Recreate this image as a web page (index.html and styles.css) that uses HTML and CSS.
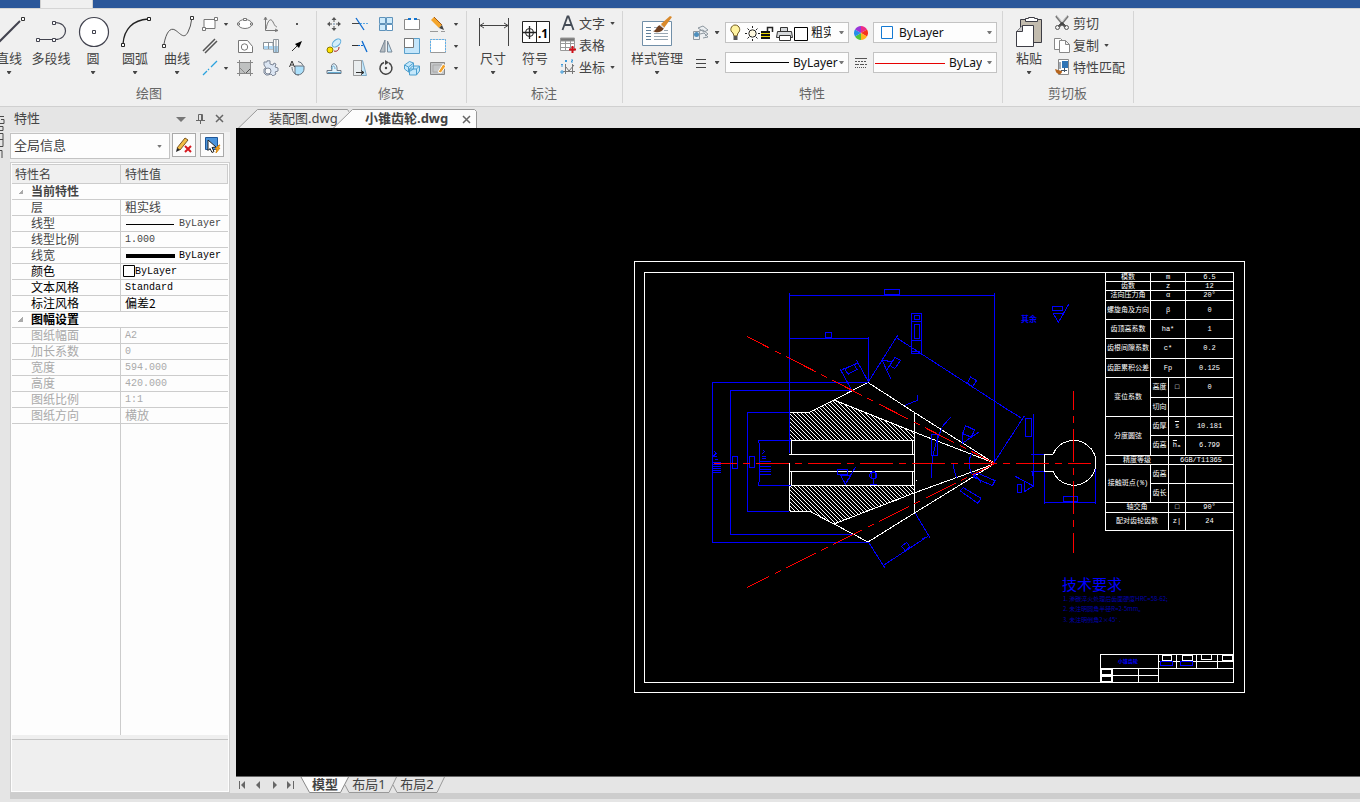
FILE: index.html
```html
<!DOCTYPE html>
<html lang="zh-CN">
<head>
<meta charset="utf-8">
<title>小锥齿轮.dwg</title>
<link rel="stylesheet" href="styles.css">
</head>
<body>
<div class="titlebar"><span class="titlebar-tab"></span></div>

<header class="ribbon">
  <section class="group group-draw">
    <div class="group-body">
      <button class="big"><svg width="42" height="36" fill="none"><path d="M9 31 32 8" stroke="#42434f" stroke-width="2"/><path d="M33.500 4.500h3v3h-3z" stroke="#333" fill="#fff"/></svg><span>直线</span><i class="caret"></i></button>
      <button class="big"><svg width="42" height="36" fill="none" stroke="#42434f"><path d="M8 26.500h17c14 0 14-17 0-17" stroke-width="1.200"/><path d="M6.500 25.500h3v3h-3zM22.500 25.500h3v3h-3zM22.500 8.500h3v3h-3z" fill="#fff"/></svg><span>多段线</span></button>
      <button class="big"><svg width="42" height="36" fill="#fff" stroke="#42434f"><circle cx="22" cy="19" r="14.500" stroke-width="1.200"/><path d="M20.500 17.500h3v3h-3z"/></svg><span>圆</span><i class="caret"></i></button>
      <button class="big"><svg width="42" height="36" fill="none" stroke="#222"><path d="M9 31C10 16 19 7 34 6" stroke-width="1.300"/><path d="M7.500 30.500h3v3h-3zM33.500 4.500h3v3h-3z" fill="#fff"/></svg><span>圆弧</span><i class="caret"></i></button>
      <button class="big"><svg width="42" height="36" fill="none" stroke="#555"><path d="M8 31C10 20 14 14 19 17S28 27 32 19Q35 13 35.500 7"/><path d="M6.500 31.500h3v3h-3zM34.500 3.500h3v3h-3z" fill="#fff" stroke="#333"/></svg><span>曲线</span><i class="caret"></i></button>
      <div class="tools tools-draw">
        <button aria-label="矩形"><svg width="16" height="16" fill="#fff" stroke="#777"><path d="M2 3.500h11v9H2z"/><path d="M.5 11.500h3v3h-3zM12.500 1.500h3v3h-3z"/></svg></button>
        <button aria-label="矩形选项"><i class="caret"></i></button>
        <button aria-label="椭圆"><svg width="16" height="16" fill="#fff" stroke="#777"><ellipse cx="8" cy="8" rx="7" ry="4.500"/><path d="M6.500 2.500h3v2h-3zM.5 7h2v2h-2zM13.500 7h2v2h-2z"/></svg></button>
        <button aria-label="公式曲线"><svg width="16" height="16" fill="none" stroke="#777"><path d="M2.500 2v12.500H15M1 4l1.500-3L4 4M12 13l3 1.500-3 1M3 13C5 3 8 2 10 6s2 4 4 5"/></svg></button>
        <button aria-label="点"><svg width="16" height="16"><path d="M7 7h2v2H7z" fill="#555"/></svg></button>
        <button aria-label="平行线"><svg width="16" height="16" stroke="#555" stroke-width="1.500"><path d="M1 13 13 1M3 15 15 3"/></svg></button>
        <span></span>
        <button aria-label="孔"><svg width="16" height="16" fill="#fff" stroke="#777"><path d="M1.500 2.500h9l5 6v6h-14z"/><circle cx="7.500" cy="9" r="3.200"/></svg></button>
        <button aria-label="轴"><svg width="16" height="16" fill="#fff" stroke="#8a9299"><path d="M.5 4.500H10V11H.5zM10.500 1.500h5v13h-5z"/><path d="M1 8h9v3H1zM11 8h4v6h-4z" fill="#abd4f0" stroke="none"/><path d="M5.500 5v6M13 2v12"/></svg></button>
        <button aria-label="箭头"><svg width="16" height="16"><path d="M3 13l5-5" stroke="#333"/><path d="M13 3 10 10 6 6z"/></svg></button>
        <button aria-label="中心线"><svg width="16" height="16" stroke="#2aa2de" stroke-width="1.300"><path d="M1 15 5 11M6 10l1-1M9 7 15 1"/></svg></button>
        <button aria-label="中心线选项"><i class="caret"></i></button>
        <button aria-label="剖面线"><svg width="16" height="16" fill="#bfc1c1" stroke="#888"><path d="M2.500 2.500h11v11h-11z"/><path d="M3 8l5 5M0 2.500h16M2.500 0v16M13.500 0v16M0 13.500h16"/><path d="M9 13l4-4" stroke="#555"/></svg></button>
        <button aria-label="齿轮"><svg width="16" height="16" fill="#dce6f3" stroke="#7d8696"><path d="M1 5V2h3V.8h3V4l3 1 1-2 2 1-1 3 3 1v3l-3 1 1 2-3 2-2-2-3 1H3l-2-2V9l2-1z"/><circle cx="5" cy="11" r="3" fill="#f8fafc"/></svg></button>
        <button aria-label="局部放大"><svg width="16" height="16" fill="none" stroke="#66717c"><path d="M6 6h9v3a6 6 0 0 1-9 5z" fill="#ace0fb"/><path d="M3 7c0 5 3 8 7 8M9 1.500a6 6 0 0 1 5 4"/><path d="M.5 7 3 1l2.500 6M1.500 5h3" stroke="#333"/></svg></button>
      </div>
    </div>
    <h2>绘图</h2>
  </section>

  <section class="group group-modify">
    <div class="group-body">
      <div class="tools tools-modify">
        <button aria-label="平移"><svg width="16" height="16" fill="#555"><path d="M8 1l2.500 3h-2v2h-1V4h-2zM8 15l2.500-3h-2v-2h-1v2h-2zM1 8l3-2.500v2h2v1H4v2zM15 8l-3-2.500v2h-2v1h2v2z"/><path d="M7 7h2v2H7z" fill="#abc"/></svg></button>
        <button aria-label="裁剪"><svg width="16" height="16" fill="none"><path d="M0 7.500h8" stroke="#444"/><path d="M8 7.500h8" stroke="#5aa9e6" stroke-dasharray="2 1"/><path d="M4 2l8 12" stroke="#0a6ad0" stroke-width="1.300"/></svg></button>
        <button aria-label="阵列"><svg width="16" height="16" stroke="#5f93bb" fill="#cdeafb"><path d="M1.500 1.500h6v6h-6zM8.500 1.500h6v6h-6zM1.500 8.500h6v6h-6z"/><path d="M8.500 8.500h6v6h-6z" fill="#fff"/></svg></button>
        <button aria-label="打断"><svg width="16" height="16" fill="#fff" stroke="#888"><path d="M5 3.500H.5v10h15v-10H11"/><path d="M4 2h3v2H4zM10 2h3v2h-3z" fill="#1274d0" stroke="none"/></svg></button>
        <button aria-label="删除"><svg width="16" height="16"><path d="M1 4 4 1l8 8-3 3z" fill="#f4a52b"/><path d="M4 1l8 8" stroke="#a45c1c"/><path d="M9 12l3-3 2 5z" fill="#444"/><path d="M0 15.500h8M11 15.500h4" stroke="#999"/></svg></button>
        <button aria-label="删除选项"><i class="caret"></i></button>
        <button aria-label="平移复制"><svg width="16" height="16" fill="none"><ellipse cx="10.500" cy="5" rx="5" ry="3" transform="rotate(-40 10.500 5)" stroke="#56a7da" fill="#d3edfb"/><circle cx="4" cy="12" r="3" fill="#ffe100" stroke="#8a7b00"/><path d="M8 13c3 1 5-1 5-4" stroke="#a22"/></svg></button>
        <button aria-label="延伸"><svg width="16" height="16" fill="none"><path d="M0 7.500h6" stroke="#333"/><path d="M6 7.500h6" stroke="#0a6ad0" stroke-dasharray="2 1"/><path d="M10 3l5 11" stroke="#0a6ad0" stroke-width="1.300"/></svg></button>
        <button aria-label="镜像"><svg width="16" height="16" stroke="#7b8997"><path d="M7 2v12H2z" fill="#b7bdc2"/><path d="M9.500 3v11H14z" fill="#c6e8fb"/></svg></button>
        <button aria-label="缩放"><svg width="16" height="16" stroke="#5a9fca"><path d="M.5.5h15v15H.5z" fill="#c4e6fb"/><path d="M.5.5h9v9h-9z" fill="#fff" stroke="#777"/></svg></button>
        <button aria-label="拉伸"><svg width="16" height="16" fill="#fff"><path d="M.5 1.500h15v13H.5z" stroke="#999"/><path d="M.5 14V1.500h15V14" stroke="#5fb0ea" stroke-dasharray="2 1"/></svg></button>
        <button aria-label="拉伸选项"><i class="caret"></i></button>
        <button aria-label="偏移"><svg width="16" height="16" fill="none" stroke="#6a7683"><path d="M1 10.500h5c-3-9 6-9 5 0h4v3H1z" fill="#e3f3fc"/><path d="M2 12.500h13M6 9c0-4 3-4 3 0" stroke="#63a9cf"/></svg></button>
        <button aria-label="拉长"><svg width="16" height="16" stroke="#7fabc8"><path d="M1.500.5h9l4 15h-13z" fill="#c5e8fb"/><path d="M1.500.5h8v15h-8z" fill="#e9edef" stroke="#999"/><path d="M4 12.500h8m-3-2 3 2-3 2" stroke="#333" fill="none"/></svg></button>
        <button aria-label="旋转"><svg width="16" height="16" fill="none"><path d="M6 2.500a6 6 0 1 0 5 .5" stroke="#444" stroke-width="1.500"/><path d="M7 0v5l4-2.500z" fill="#444"/><circle cx="8" cy="8" r="1.200" fill="#444"/></svg></button>
        <button aria-label="立体"><svg width="16" height="16" fill="#c5e8fb" stroke="#4d9fce"><path d="M.5 5l5-3.500 4 1.500v6l-5 3-4-3zM5.500 9l3-3h7v5l-3 4h-7z"/><path d="M.5 5l4 2v5M4.500 7l5-4M5.500 9h7v6M12.500 9l3-3" fill="none"/></svg></button>
        <button aria-label="编辑剖面"><svg width="16" height="16" fill="#c4c6c8" stroke="#888"><path d="M.5 2.500h14v12H.5z"/><path d="M3 5h9v7H3z" stroke="#aaa"/><path d="M8 12l5-8 3 2-5 7z" fill="#f2a22b" stroke="#fff"/></svg></button>
        <button aria-label="编辑选项"><i class="caret"></i></button>
      </div>
    </div>
    <h2>修改</h2>
  </section>

  <section class="group group-annotate">
    <div class="group-body">
      <button class="big"><svg width="42" height="36" fill="none" stroke="#444"><path d="M7.500 5v28M36.500 5v28M8 12.500h28M12 10l-4 2.500 4 2.500M32 10l4 2.500-4 2.500"/></svg><span>尺寸</span><i class="caret"></i></button>
      <button class="big"><svg width="42" height="36" fill="#fff" stroke="#222"><path d="M8.500 8.500h27v21h-27zM22.500 8.500v21"/><circle cx="15.500" cy="19.500" r="4"/><path d="M9 19.500h13M15.500 13v13" stroke-width="1.300"/><text x="24" y="25" class="icon-text">.1</text></svg><span>符号</span><i class="caret"></i></button>
      <div class="list list-annotate">
        <button><svg width="16" height="16" fill="none" stroke="#444b55" stroke-width="1.800"><path d="M2.500 15 7.500 1.500h1l5 13.500M4 10h8"/></svg>文字<i class="caret"></i></button>
        <button><svg width="16" height="16" fill="#fff" stroke="#999"><path d="M.5 1.500h14v12H.5zM.5 6.500h14M.5 10.500h14M5.500 4v9M10.500 4v9"/><path d="M.5 1h14v3H.5z" fill="#777"/><path d="M12.500 9v7M9 12.500h7" stroke="#d01018" stroke-width="2"/></svg>表格</button>
        <button><svg width="16" height="16" fill="none" stroke="#777"><path d="M5.500 5v10M3 12.500h12M12.500 5v10M6 8l3 4 5-6"/><path d="M5 1l2 2m0-2L5 3M11 1h2l-2 2h2M1 5l1 1 1-1M2 6v2M1 12h2v2H1z" stroke="#3d9ad9"/></svg>坐标<i class="caret"></i></button>
      </div>
    </div>
    <h2>标注</h2>
  </section>

  <section class="group group-props">
    <div class="group-body">
      <button class="big wide"><svg width="42" height="36" fill="none"><path d="M6.500 8.500h29v24h-29z" fill="#fff" stroke="#718fa8"/><path d="M10 14.500h5M10 17.500h5M10 20.500h5M10 23.500h5M10 26.500h5" stroke="#5f7f9a"/><path d="M18 14.500h4M18 20.500h14M18 23.500h14M18 26.500h14M28 17.500h4" stroke="#9aa8b4"/><path d="M17 18c4 0 3-6 8-6l3 3c-2 5-8 5-11 3z" fill="#71401f"/><path d="M25 11 34 3l2 1-8 11z" fill="#d9892b"/><path d="M24 12l4 3" stroke="#ddd" stroke-width="1.500"/></svg><span>样式管理</span><i class="caret"></i></button>
      <div class="prop-tools">
        <button aria-label="图层"><svg width="16" height="16" fill="#eceff2" stroke="#8d979f"><path d="M5 3l5-2 5 4-4 2zM6 6l4-1 5 4-3 2M7 9l4-1 4 4-5 1"/><path d="M.5 6.500h6v8h-6z"/><circle cx="3.500" cy="9.500" r="2.500" fill="#4e8fbd" stroke="none"/></svg></button>
        <button aria-label="图层选项"><i class="caret"></i></button>
        <div class="combo">
          <select class="sel-layer" aria-label="图层"><option>粗实线</option></select>
          <svg width="84" height="19" fill="none"><path d="M9 2c5 0 6 6 3 8l-1 3H8l-1-3C3 8 5 2 9 2z" fill="#fff3a0" stroke="#70591f"/><path d="M7.500 13h4v4h-4z" fill="#555"/><circle cx="26.500" cy="10.500" r="3.700" stroke="#222" fill="#fff9df"/><path d="M26.500 3v2M26.500 16v2M19 10.500h2M32 10.500h2M21.500 5.500l1.500 1.500M30 14l1.500 1.500M21.500 15.500l1.500-1.500M30 7l1.500-1.500" stroke="#222"/><path d="M35 8h9v8h-9z" fill="#111"/><path d="M35 10.500h9M35 13.500h9" stroke="#e7d400"/><path d="M41.500 8V4.500h5V9" stroke="#222" stroke-width="1.500"/><path d="M54.500 8V4.500h7V8M51.500 8.500h14l1 6h-16z" stroke="#333" fill="#d6d9dc"/><path d="M53.500 12.500h11v5h-11z" stroke="#333" fill="#fff"/><path d="M68.500 4.500h13v13h-13z" stroke="#000" fill="#fff"/></svg>
          <i class="caret"></i>
        </div>
        <button aria-label="颜色"><svg width="14" height="14"><path d="M7 7V0a7 7 0 0 1 6 3.500z" fill="#ed2c86"/><path d="M7 7l6-3.500a7 7 0 0 1 0 7z" fill="#f5331c"/><path d="M7 7l6 3.500A7 7 0 0 1 7 14z" fill="#ffb21c"/><path d="M7 7v7a7 7 0 0 1-6-3.500z" fill="#50c23a"/><path d="M7 7 1 10.500a7 7 0 0 1 0-7z" fill="#278fe8"/><path d="M7 7 1 3.500A7 7 0 0 1 7 0z" fill="#9a36d8"/></svg></button>
        <div class="combo">
          <select class="sel-color" aria-label="颜色"><option>ByLayer</option></select>
          <svg width="24" height="19"><path d="M7.500 3.500h11v12h-11z" fill="#fff" stroke="#1479d2"/></svg>
          <i class="caret"></i>
        </div>
        <button aria-label="线型"><svg width="12" height="12" stroke="#444"><path d="M1 2.500h10M1 6.500h10M1 10.500h10"/></svg></button>
        <button aria-label="线型选项"><i class="caret"></i></button>
        <div class="combo">
          <select class="sel-linetype" aria-label="线型"><option>ByLayer</option></select>
          <svg width="66" height="19"><path d="M4 9.500h59" stroke="#000"/></svg>
          <i class="caret"></i>
        </div>
        <button aria-label="线宽"><svg width="14" height="14" stroke="#555"><path d="M1 2.500h12"/><path d="M1 5.500h12" stroke-dasharray="2 1"/><path d="M1 8.500h12" stroke-dasharray="4 1"/><path d="M1 11.500h12" stroke-dasharray="1 1"/></svg></button>
        <div class="combo">
          <select class="sel-weight" aria-label="线宽"><option>ByLayer</option></select>
          <svg width="72" height="19"><path d="M1 10.500h70" stroke="#e60000"/></svg>
          <i class="caret"></i>
        </div>
      </div>
    </div>
    <h2>特性</h2>
  </section>

  <section class="group group-clip">
    <div class="group-body">
      <button class="big"><svg width="42" height="36" fill="#fff" stroke="#3d3d45"><path d="M12.500 6.500h21v23h-21z" fill="#c3bcae"/><path d="M17.500 8.500v-3h3v-1h6v1h3v3z"/><path d="M14.500 12.500h11v21h-17v-15z"/><path d="M8.500 18.500h6v-6" fill="#ccc"/></svg><span>粘贴</span><i class="caret"></i></button>
      <div class="list">
        <button><svg width="16" height="16" fill="none" stroke="#555"><path d="M2 1l9 11M14 1 5 12" stroke="#777" stroke-width="2"/><path d="M3 1l8 10M13 1 5 11" stroke="#eee" stroke-width=".7"/><path d="M8 7l4 4-4-1-4 1z" fill="#444"/><circle cx="3.500" cy="12.500" r="2"/><circle cx="12.500" cy="12.500" r="2"/></svg>剪切</button>
        <button><svg width="16" height="16" fill="#fff" stroke="#888"><path d="M.5 1.500h6l3 3v8h-9z"/><path d="M5.500 3.500h6l4 4v8h-10zM11.500 3.500v4h4"/></svg>复制<i class="caret caret-far"></i></button>
        <button><svg width="16" height="16" fill="#fff" stroke="#888"><path d="M4.500.5h10v15h-10z"/><path d="M8 2h6v7H8z" fill="#2f74b5" stroke="none"/><path d="M6 3v7M7 11.500h6M10.500 9v4" stroke="#456"/><path d="M1 10l3 1 4 1c0 4-4 4-6 1z" fill="#b5651e" stroke="none"/></svg>特性匹配</button>
      </div>
    </div>
    <h2>剪切板</h2>
  </section>
</header>

<div class="workspace">
  <div class="dock-strip"><svg width="10" height="44" fill="none" stroke="#4a4a4a"><path d="M0 2.500h4M1 5.500h3v4H0M0 12.500h3v4H0M0 19.500h3v13H0M0 25.500h3M0 36.500h2v8"/></svg></div>

  <aside class="panel">
    <div class="panel-title">
      <span>特性</span>
      <button aria-label="菜单"><svg width="10" height="8"><path d="M0 2h10L5 7z" fill="#777"/></svg></button>
      <button aria-label="固定"><svg width="9" height="10" fill="none" stroke="#666"><path d="M2.500 6V.5h4V6M5.500 1v5M0 6.500h9M4.500 7v3"/></svg></button>
      <button aria-label="关闭"><svg width="9" height="9" stroke="#666" stroke-width="1.500"><path d="M1 1l7 7M8 1 1 8"/></svg></button>
    </div>
    <div class="panel-filter">
      <div class="combo"><select class="sel-info" aria-label="选择对象"><option>全局信息</option></select><i class="caret"></i></div>
      <button class="tool" aria-label="取消选择"><svg width="18" height="18"><path d="M2 12 10 2l3 2-8 10z" fill="#f2be45" stroke="#7a5421"/><path d="M1 16l1-4 3 2z" fill="#222"/><path d="M10 10l6 6M16 10l-6 6" stroke="#d71920" stroke-width="2"/></svg></button>
      <button class="tool" aria-label="快速选择"><svg width="18" height="18"><path d="M2.500 1.500h12v12h-12z" fill="#4b94db" stroke="#1e5698"/><path d="M5 4l8 7-4 .5 2 4-2 1-2-4-2 2z" fill="#fff" stroke="#222"/><path d="M16 9l-4 4h2l-1 4 4-5h-2l2-3z" fill="#f6a21d" stroke="#d98a10"/></svg></button>
    </div>
    <div class="grid-box">
      <div class="grid-scroll">
        <table class="props">
          <thead><tr><th>特性名</th><th>特性值</th></tr></thead>
          <tbody>
            <tr class="section"><td colspan="2">当前特性</td></tr>
            <tr><td>层</td><td class="han">粗实线</td></tr>
            <tr><td>线型</td><td><svg width="50" height="11"><path d="M1 6.500h48" stroke="#000"/></svg><span class="after">ByLayer</span></td></tr>
            <tr><td>线型比例</td><td>1.000</td></tr>
            <tr><td>线宽</td><td class="strong"><svg width="50" height="11"><path d="M1 6h49" stroke="#000" stroke-width="4"/></svg><span class="after">ByLayer</span></td></tr>
          </tbody>
          <tbody class="strong">
            <tr><td>颜色</td><td><svg class="swatch" width="12" height="12"><path d="M.5.5h11v11H.5z" fill="#fff" stroke="#000"/></svg><span>ByLayer</span></td></tr>
            <tr><td>文本风格</td><td>Standard</td></tr>
            <tr><td>标注风格</td><td class="han">偏差2</td></tr>
            <tr class="section"><td colspan="2">图幅设置</td></tr>
          </tbody>
          <tbody class="dim">
            <tr><td>图纸幅面</td><td>A2</td></tr>
            <tr><td>加长系数</td><td>0</td></tr>
            <tr><td>宽度</td><td>594.000</td></tr>
            <tr><td>高度</td><td>420.000</td></tr>
            <tr><td>图纸比例</td><td>1:1</td></tr>
            <tr><td>图纸方向</td><td class="han">横放</td></tr>
          </tbody>
        </table>
      </div>
      <div class="grid-help"></div>
    </div>
  </aside>

  <main class="editor">
    <nav class="doc-tabs">
      <button class="doc-tab"><svg width="112" height="20"><path d="M.5 20 20.500.5h90l2 3V20z" fill="#eee" stroke="#999"/></svg><span>装配图.dwg</span></button>
      <button class="doc-tab active"><svg width="145" height="20"><path d="M.5 20 20.500.5h122l2 2V20z" fill="#fcfcfc" stroke="#999"/></svg><span>小锥齿轮.dwg</span><svg class="close" width="9" height="9" stroke="#666" stroke-width="1.500"><path d="M1 1l7 7M8 1 1 8"/></svg></button>
    </nav>

    <div class="canvas">
      <svg class="drawing" width="1124" height="648" viewBox="236 128 1124 648" fill="none">
        <defs>
          <pattern id="hatch" width="4" height="4" patternUnits="userSpaceOnUse"><path d="M0 0h1v1H0zM1 1h1v1H1zM2 2h1v1H2zM3 3h1v1H3z" fill="#fff"/></pattern>
        </defs>
        <g class="white">
          <path d="M634.500 261.500h610v431h-610zM644.500 272.500h589v410h-589z"/>
          <path class="plain" d="M790 412h19l25-12 80 32v8H790z" fill="url(#hatch)"/>
          <path class="plain" d="M790 486h124v8l-80 30-24-13h-20z" fill="url(#hatch)"/>
          <path d="M790 412.500h19l25-12.500M790 511.500h20l24 12.500M834 400l34-17.500 46.500 30L994 463M834 400l80 32 80 31M834 524l34 18 46.500-29 79.500-49M834 524l80-31 80-29M914.500 412v101M789.500 463v48"/>
          <path d="M789 440.500h125M789 454.500h125M789 471.500h125M789 485.500h125M791.500 440v14M791.500 471v14M912.500 440v14M912.500 471v14M916 480.500h1"/>
        </g>
        <g class="blue" transform="translate(690 270) scale(.33333)">
          <path d="M298 70v480M298 76h615M913 70v508M584 58h45v15h-45zM298 205h237v-4 135M406 187h18v16h-18z"/>
          <path d="M535 337H67v480h469M486 361H121v432h367M298 427H172v297h126M304 511h-98l2 15v100l-2 20h98"/>
          <path d="M127 559h15v37h-15zM178 559h15v33h-15zM68 577h25M68 583h25M68 589h25M68 595h25M68 601h25M68 607h25M209 574h34M209 589h34M209 598h34M209 604h34M209 613h34"/>
          <path d="M68 560h14M73 545l6 5-8 8M75 570h8M218 540l6 4-8 8M216 559h12M216 567h12"/>
          <path d="M451 298l35 64M500 271l35 64M456 299l48-20M465 297l27-14 9 15-27 15zM535 336l88-140M619 203 959 423M622 205l17 10M577 272l25 54M577 272l30 2-17 26M615 262l17 9-18 25-14-10z"/>
          <path d="M664 130h30v120h-30zM664 154h30M664 211h30M674 136h15v12h-15zM674 163h15v43h-15zM664 244h24v6M842 321l18 11-12 18-16-11zM645 406l37-15v-16"/>
          <path d="M781 442l-24 28M755 475q-35 75-29 148M724 493h19v63h-19zM790 583q1 20 10 42M851 540q-28 42 1 80M817 485v35l51-35M827 467l27 13-11 23-25-13zM819 492l25 9"/>
          <path d="M860 608l55 24-8 15-55-25zM820 653l53 32-9 15-53-37zM851 610l22 27M675 728l46 77M536 817l48 76M582 885l133-87M650 817l9 13-13 13-11-14zM697 807l10-5"/>
          <path d="M443 598h30v15h-30zM452 616h31l-17 26zM466 642l30-50M545 608h12v19h-12zM550 628v15M540 643h20"/><circle cx="550" cy="616" r="11"/>
        </g>
        <g class="blue" transform="translate(1010 255) scale(.33333)">
          <path d="M127 154h31v12h-31zM130 176h31l-16 26zM145 202l31-54M46 490h18v54H46zM0 468l32 20M43 483-48 623M10 474l22 14M70 478v217M64 598h39M64 649h39M67 649v15"/>
          <path d="M16 664l54 29-27 17v-32M22 688h13v24H22zM103 598v148M256 640v106M103 743h153M160 724h42v16h-42z"/>
        </g>
        <g class="white" transform="translate(1010 255) scale(.33333)"><path d="M129 598h-26v51h26M129 598a67 67 0 1 1 0 51"/></g>
        <g class="red">
          <path d="M714 463.500h377" stroke-dashoffset="10"/>
          <path d="M1073.500 391v162" stroke-dashoffset="14"/>
          <path d="M747 336.500 994 463" stroke-dashoffset="8"/>
          <path d="M747 587.500 994 464" stroke-dashoffset="8"/>
        </g>
        <g class="white" transform="translate(1010 530) scale(.33333)">
          <path d="M271 458v-84h400M271 415h400M445 373v85M445 394h225M499 373v42M559 373v42M622 373v42M307 415v43M385 415v43M271 436h174"/>
          <path d="M457 376h28v15h-28zM517 376h31v15h-31zM575 373h30v16h-30zM637 376h31v15h-31z"/>
          <path class="thick" d="M274 418h31v16h-31zM274 439h31v16h-31z"/>
          <path class="blue-line" d="M451 394h37v13h-37zM511 394h37v13h-37z"/>
        </g>
        <g class="note">
          <text x="1021" y="322" class="n8">其余</text>
          <text x="1062" y="590" class="n15">技术要求</text>
          <g class="faint">
            <text x="1063" y="601">1. 渗碳淬火处理后齿面硬度HRC=58-62;</text>
            <text x="1063" y="611">2. 未注明圆角半径R=2-5mm。</text>
            <text x="1063" y="622">3. 未注明倒角2×45° .</text>
          </g>
          <text x="1118" y="663" class="n5">小锥齿轮</text>
        </g>
      </svg>

      <table class="gear">
        <colgroup><col class="c1"><col class="c2"><col class="c3"><col class="c4"></colgroup>
        <tr class="h9"><td>模数</td><td colspan="2">m</td><td>6.5</td></tr>
        <tr class="h9"><td>齿数</td><td colspan="2">z</td><td>12</td></tr>
        <tr class="h10"><td>法向压力角</td><td colspan="2">α</td><td>20°</td></tr>
        <tr class="h19"><td>螺旋角及方向</td><td colspan="2">β</td><td>0</td></tr>
        <tr class="h19"><td>齿顶高系数</td><td colspan="2">ha*</td><td>1</td></tr>
        <tr class="h20"><td>齿根间隙系数</td><td colspan="2">c*</td><td>0.2</td></tr>
        <tr class="h19"><td>齿距累积公差</td><td colspan="2">Fp</td><td>0.125</td></tr>
        <tr class="h20"><td rowspan="2">变位系数</td><td>高度</td><td>□</td><td>0</td></tr>
        <tr class="h19"><td>切向</td><td></td><td></td></tr>
        <tr class="h19"><td rowspan="2">分度圆弦</td><td>齿厚</td><td><span class="bar">s</span></td><td>10.181</td></tr>
        <tr class="h20"><td>齿高</td><td><span class="bar">h</span>ₐ</td><td>6.799</td></tr>
        <tr class="h9"><td colspan="2">精度等级</td><td colspan="2">6GB/T11365</td></tr>
        <tr class="h19"><td rowspan="2">接触斑点(%)</td><td>齿高</td><td></td><td></td></tr>
        <tr class="h19"><td>齿长</td><td></td><td></td></tr>
        <tr class="h10"><td colspan="2">轴交角</td><td>□</td><td>90°</td></tr>
        <tr class="h18"><td colspan="2">配对齿轮齿数</td><td>z|</td><td>24</td></tr>
      </table>
    </div>

    <nav class="layout-tabs">
      <button class="step" aria-label="第一个"><svg width="16" height="16" fill="#666"><path d="M2 4h1v8H2zM8 4v8L4 8z"/></svg></button>
      <button class="step" aria-label="上一个"><svg width="16" height="16" fill="#666"><path d="M7 4v8L3 8z"/></svg></button>
      <button class="step" aria-label="下一个"><svg width="16" height="16" fill="#666"><path d="M4 4v8l4-4z"/></svg></button>
      <button class="step" aria-label="最后一个"><svg width="16" height="16" fill="#666"><path d="M2 4v8l4-4zM8 4h1v8H8z"/></svg></button>
      <button class="layout-tab active"><svg width="48" height="16"><path d="M0 0l8.500 15.500h31L47.500 0" fill="#fcfcfc" stroke="#888"/></svg><span>模型</span></button>
      <button class="layout-tab"><svg width="48" height="16"><path d="M-4 8l4 7.500h40L47.500 0" fill="none" stroke="#999"/></svg><span>布局1</span></button>
      <button class="layout-tab"><svg width="48" height="16"><path d="M-4 8l4 7.500h40L47.500 0" fill="none" stroke="#999"/></svg><span>布局2</span></button>
    </nav>
  </main>
</div>
<footer class="bottom-edge"></footer>
</body>
</html>
```
FILE: styles.css
```css
* { box-sizing: border-box; }

body {
  margin: 0;
  height: 100vh;
  display: flex;
  flex-direction: column;
  overflow: hidden;
  background: #e5e5e5;
  color: #444;
  font: 13px/18px "Noto Sans", "Noto Sans CJK SC", sans-serif;
}

button {
  margin: 0;
  padding: 0;
  border: 0;
  background: none;
  color: inherit;
  font: inherit;
}

svg { display: block; flex: none; }
h2 { margin: 4px 0 0; font: inherit; line-height: 20px; text-align: center; color: #666; }

.caret {
  width: 5px;
  height: 3px;
  flex: none;
  background: #444;
  clip-path: polygon(0 0, 100% 0, 60% 100%, 40% 100%);
}

/* Title bar */
.titlebar { height: 8px; flex: none; display: flex; background: #2b579a; }
.titlebar-tab { width: 53px; margin-left: 40px; background: #f0f0f0; border: solid #d0d0d0; border-width: 0 1px; }

/* Ribbon */
.ribbon {
  flex: none;
  display: flex;
  padding: 2px 0 3px;
  background: #f0f0f0;
  border-top: 1px solid #d5d5d5;
  border-bottom: 1px solid #d0d0d0;
}
.group { padding: 2px 5px 0; border-right: 1px solid #d5d5d5; }
.group-draw { margin-left: -19px; padding: 2px 6px 0 7px; }
.group-modify { padding: 2px 5px 0 4px; }
.group-annotate { padding-right: 6px; }
.group-props { padding-left: 4px; }
.group-clip { padding-right: 6px; }
.group-body { display: flex; height: 66px; }

.big { width: 42px; display: flex; flex-direction: column; align-items: center; white-space: nowrap; }
.big .caret { margin-top: 4px; }
.big.wide { width: 60px; }
.icon-text { font: bold 12px "Noto Sans", sans-serif; fill: #000; stroke: none; }

.tools { display: grid; grid-auto-rows: 22px; }
.tools > button { display: grid; place-items: center; }
.tools-draw { grid-template-columns: 20px 12px 26px 26px 26px; margin-left: 2px; }
.tools-modify { grid-template-columns: repeat(5, 26px) 10px; }

.list { margin-left: 2px; display: grid; grid-auto-rows: 22px; }
.list-annotate { width: 58px; }
.list > button { display: flex; align-items: center; gap: 3px; padding: 0 2px; line-height: 16px; padding-bottom: 2px; white-space: nowrap; }
.list .caret { margin-left: 2px; }

.prop-tools {
  margin: 0 0 0 6px;
  padding-top: 9px;
  display: grid;
  grid-template: 21px 21px / 16px 16px 124px 24px 124px;
  row-gap: 9px;
}
.prop-tools > button { display: grid; place-items: center; }

.combo { display: grid; align-items: center; background: #fdfdfd; border: 1px solid #c3c3c3; }
.combo > * { grid-area: 1 / 1; pointer-events: none; }
.combo > select {
  appearance: none;
  width: 100%;
  height: 100%;
  padding: 0;
  border: 0;
  border-radius: 0;
  background: none;
  color: #111;
  font: 12px "Noto Sans", "Noto Sans CJK SC", sans-serif;
  pointer-events: auto;
}
.combo > .caret { justify-self: end; margin-right: 4px; background: #777; }
.combo > .sel-layer { padding: 0 17px 0 85px; }
.combo > .sel-color { padding-left: 25px; }
.combo > .sel-linetype { padding: 0 9px 0 67px; }
.combo > .sel-weight { padding: 0 14px 0 75px; }
.combo > .sel-info { padding: 0 0 2px 3px; color: #444; font-size: 13px; }

/* Workspace */
.workspace { flex: 1; min-height: 0; display: flex; }
.dock-strip { width: 10px; padding-top: 7px; flex: none; }
.panel { width: 220px; flex: none; display: flex; flex-direction: column; }
.panel-title { display: flex; align-items: center; gap: 10px; height: 25px; padding: 0 6px 2px 4px; }
.panel-title span { flex: 1; padding-bottom: 2px; }
.panel-filter { display: flex; gap: 2px; padding: 1px 0 3px; background: #f0f0f0; }
.panel-filter .combo { width: 160px; height: 26px; }
.panel-filter .combo .caret { margin-right: 7px; }
.tool { width: 24px; height: 24px; display: grid; place-items: center; background: #fcfcfc; border: 1px solid #a9a9a9; }
.tool + .tool { margin-left: 2px; }

.grid-box { flex: 1; display: flex; flex-direction: column; padding: 1px; border: 1px solid #cfcfcf; background: #fdfdfd; }
.grid-scroll {
  flex: 1;
  background: linear-gradient(#ccc, #ccc) 108px 0 / 1px 100% no-repeat #fdfdfd;
}
.grid-help { height: 56px; background: #efefef; border-top: 1px solid #efefef; box-shadow: inset 0 3px #efefef, inset 0 4px #c5c5c5; }

.props { width: 100%; table-layout: fixed; border-collapse: separate; border-spacing: 0; }
.props th { height: 20px; padding: 0 0 0 3px; text-align: left; font: 12px/18px "Noto Sans CJK SC", sans-serif; background: #f0f0f0; border: solid #ccc; border-width: 1px 1px 1px 0; }
.props td { height: 16px; padding: 0 0 0 19px; border-bottom: 1px solid #ccc; white-space: nowrap; overflow: hidden; vertical-align: top; font: 12px/13px "Noto Sans CJK SC", sans-serif; }
.props th:first-child { width: 109px; }
.props th + th { padding-left: 4px; }
.props td + td { padding-left: 4px; font: 10px/15px "Liberation Mono", monospace; }
.props td + .han { font: 12px/13px "Noto Sans CJK SC", sans-serif; }
.props td:first-child { border-right: 1px solid #ccc; }
.props td svg { display: inline-block; vertical-align: middle; }
.props .after { margin-left: 4px; }
.props .swatch { margin-left: -2px; }
.props .strong { color: #000; }
.props .dim { color: #aaa; }
.props .section td {
  border-right: 0;
  font-weight: bold;
  background: linear-gradient(135deg, transparent 50%, #aaa 50%) 6px 5px / 5px 5px no-repeat #fdfdfd;
}

.editor { flex: 1; min-width: 0; margin-left: 6px; display: flex; flex-direction: column; }
.doc-tabs { flex: none; display: flex; height: 21px; padding: 2px 0 0 1px; }
.doc-tab { display: grid; height: 20px; align-items: center; }
.doc-tab > * { grid-area: 1 / 1; }
.doc-tab span { padding: 0 0 2px 32px; text-align: left; }
.doc-tab.active { margin-left: -17px; font-weight: bold; }
.doc-tab.active span { padding-left: 33px; }
.doc-tab .close { justify-self: end; margin-right: 6px; }

.canvas { flex: 1; min-height: 0; position: relative; overflow: hidden; background: #000; }
.drawing { position: absolute; left: 0; top: 0; shape-rendering: crispEdges; }
.drawing path, .drawing circle { vector-effect: non-scaling-stroke; stroke-width: 1; }
.white { stroke: #fff; }
.plain { stroke: none; }
.blue, .drawing .blue-line { stroke: #00f; }
.drawing .thick { stroke-width: 2; }
.red { stroke: #f00; stroke-dasharray: 33 6 7 6; }
.note { fill: #00f; font: 6px "Noto Sans CJK SC", sans-serif; }
.note .n15 { font-size: 15px; }
.note .n8 { font-size: 8px; font-weight: bold; }
.note .n5 { font-size: 5px; font-weight: bold; }
.note .faint { fill: #0000b0; }

.gear {
  position: absolute;
  left: 869px;
  top: 144px;
  width: 129px;
  table-layout: fixed;
  border-collapse: collapse;
  color: #fff;
  font: 7px/7px "Liberation Mono", "Noto Sans CJK SC", monospace;
}
.gear td { padding: 0; border: 1px solid #fff; text-align: center; white-space: nowrap; overflow: hidden; }
.c1 { width: 45px; }
.c2 { width: 18px; }
.c3 { width: 17px; }
.c4 { width: 48px; }
.h9 { height: 9px; }
.h10 { height: 10px; }
.h18 { height: 18px; }
.h19 { height: 19px; }
.h20 { height: 20px; }
.bar { text-decoration: overline; }

.layout-tabs { flex: none; display: flex; height: 17px; border-top: 1px solid #666; }
.step { width: 16px; height: 16px; }
.step:first-child { margin-left: 1px; }
.layout-tab { display: grid; height: 16px; line-height: 14px; }
.layout-tab svg { overflow: visible; }
.layout-tab > * { grid-area: 1 / 1; }
.layout-tab span { padding-right: 8px; }
.layout-tab.active { font-weight: bold; }
.layout-tab.active span { padding-right: 0; }

.bottom-edge { flex: none; height: 9px; margin-left: 10px; background: #cdcdcd; border-bottom: 3px solid #e5e5e5; }
```
